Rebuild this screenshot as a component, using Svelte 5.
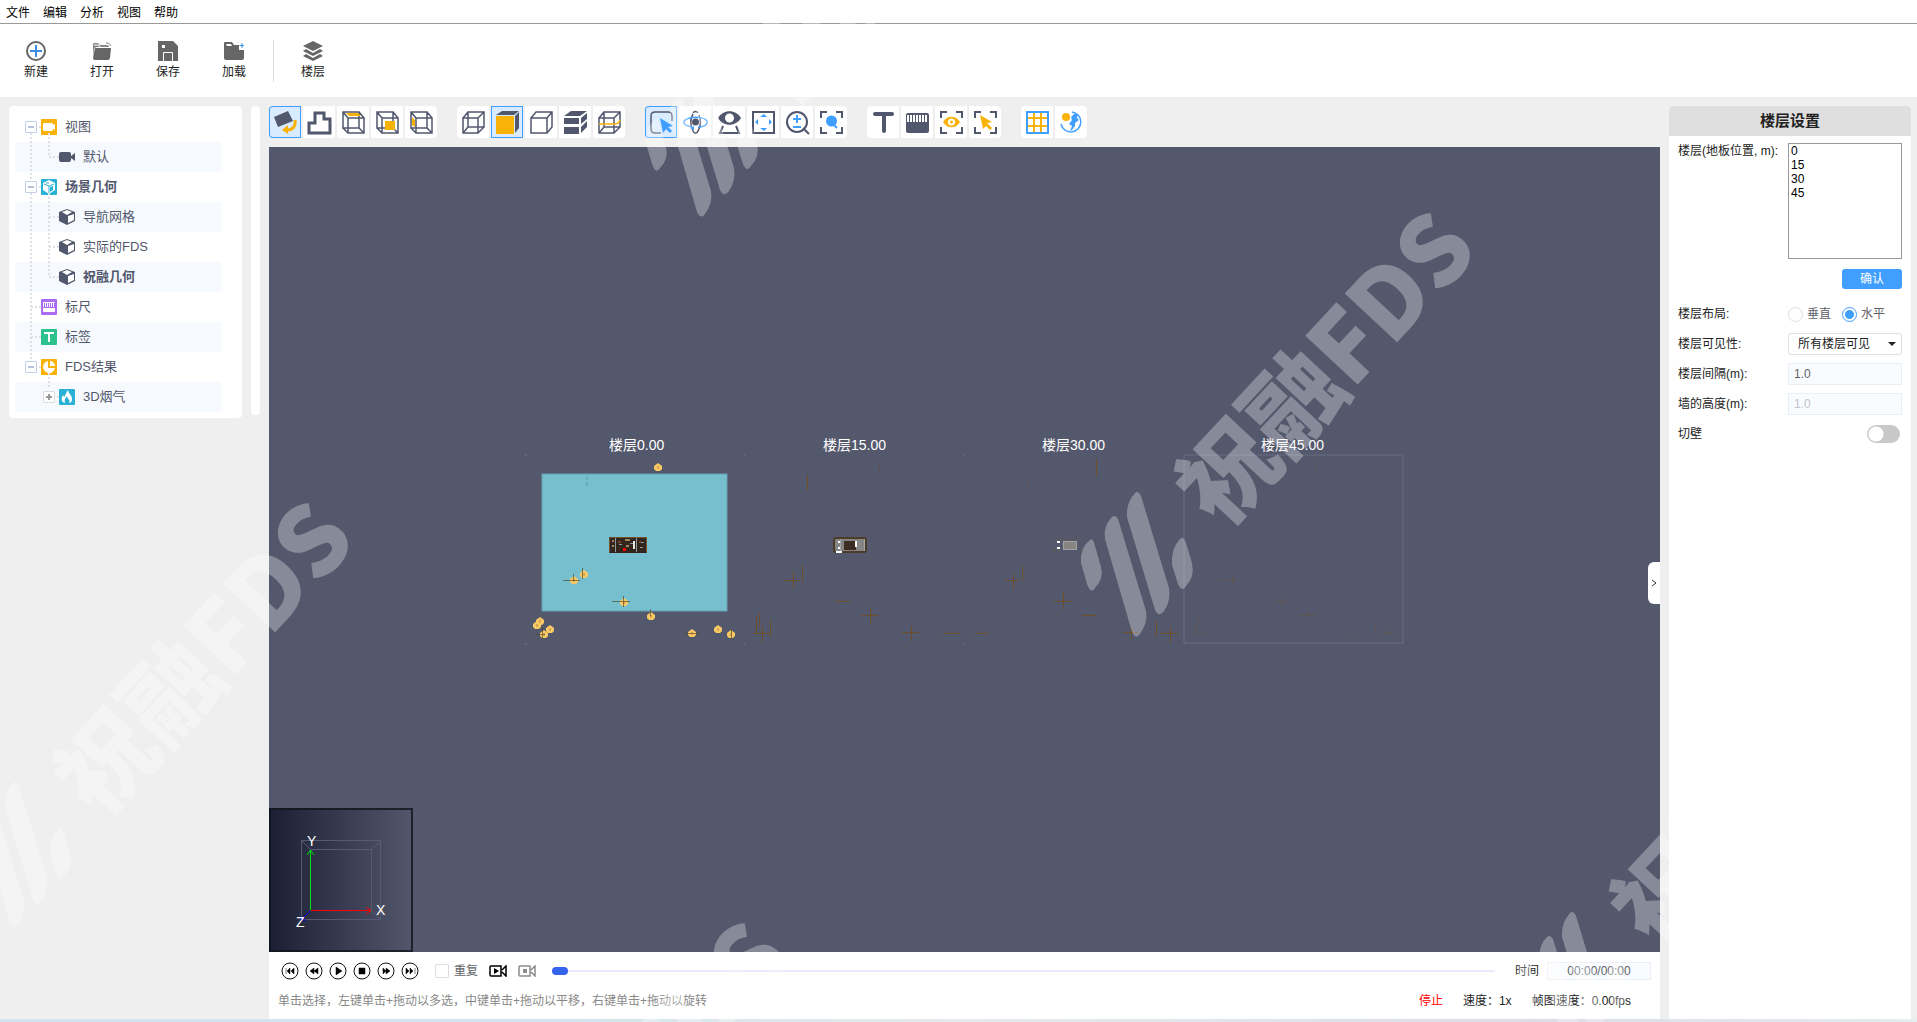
<script lang="ts">
	type Shape = [kind: string, d: string];

	const menus = ['文件', '编辑', '分析', '视图', '帮助'];

	const fileTools = [
		{ id: 'new', label: '新建' },
		{ id: 'open', label: '打开' },
		{ id: 'save', label: '保存' },
		{ id: 'load', label: '加载' }
	];

	const brackets = 'M6 12V6H12M21 6H27V12M27 21V27H21M12 27H6V21';
	const wireRight = 'M6 6H22V22H6ZM11 12H27V27H11ZM6 6L11 12M22 6L27 12M22 22L27 27M6 22L11 27';
	const wireLeft = 'M6 12H21V27H6ZM11 6H27V21H11ZM6 12L11 6M21 12L27 6M21 27L27 21M6 27L11 21';

	// viewport toolbar, drawn on a 32px grid
	const icons: Record<string, Shape[]> = {
		rotate: [
			['dark', 'M5 11L19 5L24 15L9 21Z'],
			['gold-line heavy', 'M26 14C27 20 24 24 18 24'],
			['gold', 'M19 19L13 24L19 28Z']
		],
		outline: [['line heavy', 'M6 27V17H12V7H21V13H27V27Z']],
		top: [['line', wireRight], ['gold', 'M9 7H21L24 10H12Z']],
		front: [['line', wireRight], ['gold', 'M14 15H24V24H14Z']],
		side: [['line', wireRight], ['gold', 'M7 11L10 14V21L7 19Z']],
		wire: [['line', wireLeft]],
		solid: [
			['gold', 'M5 10H23V28H5Z'],
			['dark', 'M5 9L11 5H28L23 9Z'],
			['dark', 'M24 10L28 6V22L24 27Z']
		],
		box: [['line', 'M6 12H22V27H6ZM6 12L11 6H27V21L22 27M22 12L27 6']],
		slice: [
			['dark', 'M5 10L12 5H28L21 10Z'],
			['dark', 'M5 12H20V18H5Z'],
			['dark', 'M5 21H20V28H5Z'],
			['dark', 'M22 12L28 7V13L22 18Z'],
			['dark', 'M22 21L28 15V21L22 27Z']
		],
		section: [['line', wireLeft], ['gold-line', 'M6 18H20C25 18 26 17 27 14']],
		select: [
			['line', 'M16 27H10Q6 27 6 23V10Q6 6 10 6H23Q27 6 27 10V15'],
			['blue', 'M15 12L28 20L23 21L27 25L25 27L21 23L18 27Z']
		],
		orbit: [
			['line', 'M14 7C15 5 18 5 19 7M20 9C22 14 22 20 19 25C18 28 15 28 14 25C11 20 11 13 14 8'],
			['blue-line', 'M13 21C2 19 3 14 11 12C17 10 30 12 28 17C27 20 22 21 19 21'],
			['dark', 'M13 16A3 3 0 1 0 20 16A3 3 0 1 0 13 16'],
			['blue', 'M15 20L11 22L15 24Z']
		],
		eye: [
			['dark', 'M5 12C10 3 23 3 28 12C23 21 10 21 5 12Z'],
			['white', 'M12 12A4 4 0 1 0 21 12A4 4 0 1 0 12 12'],
			['line thick', 'M10 20L7 27H26L23 20']
		],
		fit: [
			['line thick', 'M6 6H27V27H6Z'],
			['blue', 'M17 8L20 11H13ZM17 25L13 22H20ZM8 16L11 13V19ZM25 16L22 13V19Z']
		],
		zoom: [
			['line thick', 'M6 16A10 10 0 1 0 26 16A10 10 0 1 0 6 16M22 22L28 28'],
			['blue-line thick', 'M16 9V17M12 13H20M12 21H20']
		],
		focus: [
			['line thick', brackets],
			['blue', 'M11 15A5 5 0 1 0 22 15A5 5 0 1 0 11 15'],
			['blue-line thick', 'M19 19L22 22']
		],
		text: [['line bar', 'M8 8H25M17 8V25']],
		ruler: [
			['dark', 'M5 9Q5 7 7 7H26Q28 7 28 9V25Q28 27 26 27H7Q5 27 5 25Z'],
			['white', 'M6 9H8V16H6ZM9 9H11V16H9ZM12 9H14V16H12ZM15 9H17V16H15ZM18 9H20V16H18ZM21 9H23V16H21ZM24 9H26V16H24Z']
		],
		watch: [
			['line thick', brackets],
			['gold', 'M8 16C12 9 21 9 25 16C21 23 12 23 8 16Z'],
			['white', 'M13 16A3 3 0 1 0 20 16A3 3 0 1 0 13 16'],
			['gold', 'M15 16A1 1 0 1 0 18 16A1 1 0 1 0 15 16']
		],
		pick: [['line thick', brackets], ['gold', 'M11 9L23 16L18 17L23 22L21 24L17 20L14 23Z']],
		grid: [
			['gold-line thick', 'M6 12H27M6 20H27M13 6V27M20 6V27'],
			['blue-line thick', 'M6 6H27V27H6Z']
		],
		world: [
			['blue-line', 'M17 6A10 10 0 1 1 6 18'],
			['gold', 'M7 11A4 4 0 1 0 15 11A4 4 0 1 0 7 11'],
			['blue', 'M16 11L19 8L23 8L22 12L24 14L20 17L20 20L17 24L15 25L17 20L14 18L17 14Z']
		]
	};

	const toolGroups = [
		[['rotate', '旋转'], ['outline', '轮廓'], ['top', '顶视图'], ['front', '前视图'], ['side', '侧视图']],
		[['wire', '线框'], ['solid', '实体'], ['box', '边框'], ['slice', '切片'], ['section', '剖面']],
		[['select', '选择'], ['orbit', '环绕'], ['eye', '漫游'], ['fit', '平移'], ['zoom', '缩放'], ['focus', '聚焦']],
		[['text', '文字'], ['ruler', '标尺'], ['watch', '观察'], ['pick', '拾取']],
		[['grid', '网格'], ['world', '复位']]
	];

	let active = $state(['rotate', 'solid', 'select']);

	function toggleTool(id: string) {
		active = active.includes(id) ? active.filter((t) => t !== id) : [...active, id];
	}

	const tree = [
		{ label: '视图', icon: 'view', tint: 'amber', level: 0, expander: '-' },
		{ label: '默认', icon: 'camera', tint: '', level: 1 },
		{ label: '场景几何', icon: 'scene', tint: 'cyan', level: 0, expander: '-', bold: true },
		{ label: '导航网格', icon: 'cube', tint: '', level: 1 },
		{ label: '实际的FDS', icon: 'cube', tint: '', level: 1 },
		{ label: '祝融几何', icon: 'cube', tint: '', level: 1, bold: true },
		{ label: '标尺', icon: 'ruler', tint: 'violet', level: 0 },
		{ label: '标签', icon: 'tag', tint: 'green', level: 0 },
		{ label: 'FDS结果', icon: 'pie', tint: 'amber', level: 0, expander: '-' },
		{ label: '3D烟气', icon: 'flame', tint: 'cyan', level: 1, expander: '+' }
	];

	const floorLabels = [
		{ text: '楼层0.00', x: 340 },
		{ text: '楼层15.00', x: 554 },
		{ text: '楼层30.00', x: 773 },
		{ text: '楼层45.00', x: 992 }
	];

	const lamps = [
		[389, 320], [315, 427], [305, 433], [355, 455], [382, 469], [271, 474],
		[268, 478], [281, 482], [275, 487], [423, 486], [449, 482], [462, 487]
	];

	const playback = [
		{ label: '开头', d: 'M5 6V12M9 6L6 9L9 12ZM13 6L10 9L13 12Z' },
		{ label: '后退', d: 'M9 6L5 9L9 12ZM13 6L9 9L13 12Z' },
		{ label: '播放', d: 'M7 5L13 9L7 13Z' },
		{ label: '停止', d: 'M6 6H12V12H6Z' },
		{ label: '前进', d: 'M6 6L9 9L6 12ZM9 6L13 9L9 12Z' },
		{ label: '结尾', d: 'M5 6L8 9L5 12ZM9 6L12 9L9 12ZM14 6V12' }
	];

	const stamps = [[0, 0], [-1122, 290], [-435, -420], [-686, 710], [435, 420]];

	let floors = $state('0\n15\n30\n45');
	let layout = $state('horizontal');
	let frame = $state(0);
	let repeat = $state(false);
	let cutWall = $state(false);
</script>

<div class="app">
	<nav class="menubar">
		{#each menus as menu}
			<button>{menu}</button>
		{/each}
	</nav>

	<header class="toolbar">
		{#each fileTools as tool}
			<button class="file-tool">
				<svg viewBox="0 0 20 20">
					{#if tool.id === 'new'}
						<circle cx="10" cy="10" r="9" fill="none" stroke="#666" stroke-width="2" />
						<path d="M10 4V16M4 10H16" stroke="#3a8ee6" stroke-width="2" />
					{:else if tool.id === 'open'}
						<path d="M1 16V3Q1 2 2 2H6L8 4H15Q17 4 17 6H4L2 8Z" fill="#888" />
						<path d="M3 7H19L18 17Q17 19 16 19H3Q1 19 1 17Z" fill="#666" />
						<path d="M2 4H7L8 6" stroke="#fff" fill="none" />
						<path d="M14 2Q17 1 19 5" stroke="#888" fill="none" />
					{:else if tool.id === 'save'}
						<path d="M0 0H15L20 5V20H0Z" fill="#666" />
						<path d="M5.5 20V11.5H14.5V20" stroke="#fff" fill="none" />
						<path d="M4 4H7V7H4Z" fill="#fff" />
					{:else}
						<path d="M0 2Q0 1 1 1H8L10 4H15V9H20V17Q20 19 18 19H2Q0 19 0 17Z" fill="#666" />
						<path d="M2 3H7L8 5H3Z" fill="#fff" />
						<path d="M18 2V7M15.5 4.5H20" stroke="#3a8ee6" />
					{/if}
				</svg>
				{tool.label}
			</button>
		{/each}
		<span class="divider"></span>
		<button class="file-tool">
			<svg viewBox="0 0 20 20" fill="#666">
				<path d="M10 0L20 5L10 10L0 5Z" />
				<path d="M0 10L3 8L10 12L17 8L20 10L10 15Z" />
				<path d="M0 15L3 13L10 17L17 13L20 15L10 20Z" />
			</svg>
			楼层
		</button>
	</header>

	<main>
		<aside class="tree">
			<svg class="guides" width="60" height="312">
				<path d="M22 27V261M40 27V51H50M40 87V171H50M40 111H50M40 141H50M22 201H32M22 231H32M30 21H32M30 81H32M30 261H32M40 267V282M48 291H50" />
			</svg>
			<ul>
				{#each tree as node}
					<li class:child={node.level === 1} class:bold={node.bold} class:nested={node.expander === '+'}>
						{#if node.expander}
							<button class="expander" class:plus={node.expander === '+'} aria-label={'展开 ' + node.label}></button>
						{:else}
							<span class="spacer"></span>
						{/if}
						<span class="node-icon {node.tint}">
							<svg viewBox="0 0 16 16">
								{#if node.icon === 'view'}
									<path fill="#fff" d="M2 5Q2 4 3 4H11Q12 4 12 6L14 5V11L12 10V11Q12 12 10 12H4Q2 12 2 11Z" />
								{:else if node.icon === 'camera'}
									<path fill="#51576c" d="M0 5Q0 3 2 3H10Q12 3 12 5V7L16 4V12L12 9V11Q12 13 10 13H2Q0 13 0 11Z" />
								{:else if node.icon === 'scene'}
									<path fill="#fff" d="M8 1L14 4V11L8 15L2 11V4Z" />
									<path stroke="#29b2d6" fill="none" d="M3 5L8 7L13 5M8 7V14M5 4H8" />
									<path fill="#29b2d6" d="M9 8L12 7V11L9 13Z" />
								{:else if node.icon === 'cube'}
									<path fill="#51576c" d="M8 0L16 3V12L8 16L0 12V3Z" />
									<path fill="#fff" d="M8 1L13 3L8 6L3 3ZM9 7L15 5V11L9 14Z" />
								{:else if node.icon === 'ruler'}
									<rect x="2" y="3" width="12" height="10" rx="1" fill="#fff" />
									<path stroke="#ab6cf2" d="M3.5 4V8M5.5 4V8M7.5 4V8M9.5 4V8M11.5 4V8M13.5 4V8M2 8.5H14" />
								{:else if node.icon === 'tag'}
									<path stroke="#fff" stroke-width="2" d="M3 4H13M8 4V13" />
								{:else if node.icon === 'pie'}
									<path fill="#fff" d="M7 2V9H14A6 6 0 1 1 7 2ZM9 2A5 5 0 0 1 14 7H9Z" />
								{:else}
									<path fill="#fff" d="M9 1C9 4 14 7 13 11C13 13 11 14 10 14C12 11 8 10 8 7C6 10 5 11 6 14C2 13 2 9 4 6L5 8C7 6 7 3 9 1Z" />
								{/if}
							</svg>
						</span>
						<span>{node.label}</span>
					</li>
				{/each}
			</ul>
		</aside>

		<div class="scroll-track"></div>

		<section class="stage">
			<div class="view-tools">
				{#each toolGroups as group}
					<div class="group">
						{#each group as [id, label]}
							<button class:active={active.includes(id)} aria-label={label} onclick={() => toggleTool(id)}>
								<svg viewBox="0 0 32 32">
									{#each icons[id] as [kind, d]}
										<path class={kind} {d} />
									{/each}
								</svg>
							</button>
						{/each}
					</div>
				{/each}
			</div>

			<div class="viewport">
				<svg class="scene">
					<path class="corner" d="M255 308H258M474 308H477M694 308H696M255 497H258M474 497H477M694 497H696" />
					<rect x="273" y="327" width="185" height="137" fill="#76bfcf" stroke="#679fb2" />
					<path class="ghost" d="M318 330V333M318 335V339" />

					<!-- floor 0 building -->
					<rect x="340" y="390" width="38" height="16" rx="1" fill="#33251e" />
					<path stroke="#71552f" d="M341 390.5H378M340.5 391V405M377.5 391V405" />
					<path stroke="#9d8860" d="M343 394H345M343 399H345M356 393H361M357 399H360" stroke-width="2" />
					<path stroke="#8d9a9a" d="M346.5 391V405M367.5 391V405M350 397.5H353M372 395.5H375M371 400.5H374M361 396.5H364" />
					<path stroke="#e4e4e4" d="M365 394V402" stroke-width="2" />
					<path stroke="#73412d" d="M349 395H352M370 395H372" stroke-width="2" />
					<rect x="354" y="401" width="3" height="3" fill="#f00" />

					<!-- floor 15 building -->
					<rect x="565" y="391" width="32" height="14" rx="2" fill="#858585" stroke="#4d3b29" stroke-width="2" />
					<rect x="575" y="394" width="12" height="9" fill="#3c2c22" />
					<path stroke="#a5a5a5" d="M571.5 392V404M595.5 392V404" />
					<path stroke="#fff" d="M587 394V400M567 405H573M569 395H571M569 401H571" stroke-width="2" />

					<!-- floor 30 building -->
					<path stroke="#6e5438" stroke-dasharray="2 2" fill="none" d="M786 392H814M785 403H793M812 403H815" />
					<rect x="794" y="394" width="14" height="9" fill="#888580" />
					<path stroke="#a3a3a3" fill="none" d="M794.5 394.5H807.5V402.5H794.5Z" />
					<path stroke="#fff" stroke-width="2" d="M788 395H791M788 401H791" />

					<rect class="frame" x="915" y="308" width="219" height="188" />
					<path
						class="sprinkler"
						d="M538 328V343M533 418V435M524 425V441M515 433H531M566 454H581M601 460V477M592 468H609M487 470V486M490 466V480M501 473V490M493 479V495M484 486H502M642 479V494M633 485H650M674 486H690M706 486H720M827 312V329M753 419V434M744 427V442M736 433H750M794 445V462M785 454H803M813 468H827M887 474V490M901 480V496M892 486H909M862 480V492M854 485H869"
					/>
					<path
						class="sprinkler faint"
						d="M610 317V325M758 334V342M1046 315V322M951 433H969M963 429V437M1007 454H1019M1013 449V459M1031 468H1046M1039 464V468M929 470V480M926 476V486M928 486H936M1106 478V485M1080 486H1086M1112 486H1126M1120 483V488"
					/>

					{#each lamps as [x, y]}
						<path class="lamp" d="M{x} {y - 4}L{x + 4} {y - 1}V{y + 2}L{x + 2} {y + 4}H{x - 2}L{x - 4} {y + 2}V{y - 1}Z" />
						<path class="lamp-mark" d="M{x} {y - 1}V{y + 2}" />
					{/each}
					<path class="lamp-cross" d="M294 433H311M304 427V433M313 421V432M343 454H361M354 449V460M381 462V469M415 486H431M265 487H276M273 480V494M462 482V492" />

					{#each floorLabels as label}
						<text x={label.x} y="303">{label.text}</text>
					{/each}
				</svg>

				<svg class="axes" viewBox="0 0 144 144">
					<defs>
						<linearGradient id="axes-bg">
							<stop offset="0" stop-color="#1b1f34" />
							<stop offset="1" stop-color="#53576c" />
						</linearGradient>
					</defs>
					<rect width="144" height="144" fill="url(#axes-bg)" />
					<rect x="1" y="1" width="142" height="142" fill="none" stroke="#12141c" stroke-opacity="0.8" stroke-width="2" />
					<path stroke="#565a72" fill="none" d="M32.5 32.5H111.5V111.5H32.5ZM41.5 41.5H102.5V102.5M32.5 32.5L41.5 41.5M111.5 32.5L102.5 41.5M111.5 111.5L102.5 102.5" />
					<path stroke="#00e010" fill="none" d="M41.5 102V42M38 47L41.5 42L45 47" />
					<path stroke="#f00" fill="none" d="M42 102.5H102M97 99L102 102.5L97 106" />
					<path stroke="#00f" fill="none" d="M41 103L32 112M32 108V112H37" />
					<text x="38" y="38">Y</text>
					<text x="107" y="107">X</text>
					<text x="27" y="119">Z</text>
				</svg>

				<button class="collapse" aria-label="收起">
					<svg viewBox="0 0 8 8"><path d="M2 1L6 4L2 7" /></svg>
				</button>
			</div>

			<footer>
				<div class="player">
					<div class="playback">
						{#each playback as control}
							<button aria-label={control.label}>
								<svg viewBox="0 0 18 18">
									<circle cx="9" cy="9" r="8" />
									<path d={control.d} />
								</svg>
							</button>
						{/each}
					</div>
					<label class="repeat"><input type="checkbox" bind:checked={repeat} />重复</label>
					<button class="record" aria-label="录制">
						<svg viewBox="0 0 18 12">
							<path d="M2 1H12V11H2Q1 11 1 10V2Q1 1 2 1ZM13 5L17 1V11L13 7" />
							<path class="fill" d="M5 3L10 6L5 9Z" />
						</svg>
					</button>
					<button class="record off" aria-label="停止录制" disabled>
						<svg viewBox="0 0 18 12">
							<path d="M2 1H12V11H2Q1 11 1 10V2Q1 1 2 1ZM13 5L17 1V11L13 7" />
							<path class="fill" d="M5 4H9V8H5Z" />
						</svg>
					</button>
					<input class="timeline" type="range" min="0" max="100" bind:value={frame} aria-label="时间轴" />
					<label class="time-label" for="time">时间</label>
					<input id="time" class="time" value="00:00/00:00" />
				</div>
				<div class="status">
					<span class="hint">单击选择，左键单击+拖动以多选，中键单击+拖动以平移，右键单击+拖动以旋转</span>
					<span class="stopped">停止</span>
					<span>速度：1x</span>
					<span>帧图速度：0.00fps</span>
				</div>
			</footer>
		</section>

		<aside class="settings">
			<h2>楼层设置</h2>
			<div class="row tall">
				<label for="floors">楼层(地板位置, m):</label>
				<textarea id="floors" bind:value={floors}></textarea>
			</div>
			<button class="confirm">确认</button>
			<div class="row" role="radiogroup" aria-labelledby="layout-label">
				<span id="layout-label">楼层布局:</span>
				<div class="radios">
					<label><input type="radio" value="vertical" bind:group={layout} />垂直</label>
					<label><input type="radio" value="horizontal" bind:group={layout} />水平</label>
				</div>
			</div>
			<div class="row">
				<label for="visible">楼层可见性:</label>
				<div class="select">
					<select id="visible"><option>所有楼层可见</option></select>
				</div>
			</div>
			<div class="row">
				<label for="spacing">楼层间隔(m):</label>
				<input id="spacing" class="number" value="1.0" />
			</div>
			<div class="row">
				<label for="height">墙的高度(m):</label>
				<input id="height" class="number" value="1.0" disabled />
			</div>
			<div class="row">
				<label for="cut">切壁</label>
				<input id="cut" class="switch" type="checkbox" role="switch" bind:checked={cutWall} />
			</div>
		</aside>
	</main>

	<div class="desktop-edge"></div>

	<svg class="watermark" aria-hidden="true">
		{#each stamps as [x, y]}
			<g transform="translate({x} {y})">
				<path d="M1090 540Q1080 547 1081 563L1087 584Q1091 595 1095 588Q1104 579 1101 567L1095 546Q1093 537 1090 540Z" />
				<path d="M1112 517Q1103 526 1105 539L1132 632Q1136 640 1140 634Q1148 623 1146 611L1118 519Q1115 514 1112 517Z" />
				<path d="M1135 493Q1126 503 1127 517L1155 610Q1159 618 1164 611Q1171 601 1169 588L1141 496Q1138 490 1135 493Z" />
				<path d="M1180 539Q1171 548 1172 565L1178 584Q1182 593 1186 586Q1195 577 1192 563L1186 543Q1183 535 1180 539Z" />
				<text transform="translate(1221 531) rotate(-47)">祝融FDS</text>
			</g>
		{/each}
	</svg>
</div>

<style>
	:global(body) {
		margin: 0;
		background: #efefef;
	}

	.app {
		display: flex;
		flex-direction: column;
		min-height: 100vh;
		font: 12px/16px 'Liberation Sans', 'Noto Sans CJK SC', sans-serif;
		color: #222;
	}

	button,
	input,
	select,
	textarea {
		box-sizing: border-box;
		margin: 0;
		padding: 0;
		border: 0;
		background: none;
		font: inherit;
		color: inherit;
	}

	button {
		cursor: pointer;
	}

	svg {
		display: block;
	}

	.menubar {
		display: flex;
		gap: 13px;
		height: 21px;
		padding: 2px 0 0 6px;
		background: #fff;
		border-bottom: 1px solid #999;
		color: #000;
	}

	.toolbar {
		display: flex;
		align-items: flex-start;
		height: 57px;
		padding: 16px 3px 0;
		background: #fff;
	}

	.file-tool {
		display: flex;
		flex-direction: column;
		align-items: center;
		gap: 3px;
		width: 66px;
		padding-top: 1px;
	}

	.file-tool svg {
		width: 20px;
		height: 20px;
	}

	.divider {
		width: 1px;
		height: 42px;
		margin: 0 6px;
		background: #ddd;
	}

	main {
		flex: 1;
		display: grid;
		grid-template-columns: 233px 9px minmax(0, 1fr) 242px;
		gap: 9px;
		padding: 9px 6px 0 9px;
	}

	.tree {
		position: relative;
		align-self: start;
		padding: 6px;
		border-radius: 4px;
		background: #fff;
		color: #51576c;
		font-size: 13px;
	}

	.tree ul {
		margin: 0;
		padding: 0;
		list-style: none;
	}

	.tree li {
		display: flex;
		align-items: center;
		width: 207px;
		height: 30px;
		box-sizing: border-box;
		padding-left: 10px;
		border-radius: 4px;
	}

	.tree li:nth-child(even) {
		background: #f6faff;
	}

	.tree .child {
		padding-left: 28px;
	}

	.tree .bold {
		font-weight: bold;
	}

	.guides {
		position: absolute;
		left: 0;
		top: 0;
		pointer-events: none;
	}

	.guides path {
		fill: none;
		stroke: #dfe0e5;
		stroke-width: 2;
		stroke-dasharray: 2 2;
	}

	.expander,
	.spacer {
		width: 12px;
		height: 12px;
		margin-right: 4px;
	}

	.expander {
		position: relative;
		border: 1px solid #c3cfe6;
		border-radius: 1px;
		background: #fff;
	}

	.expander::before,
	.expander.plus::after {
		content: '';
		position: absolute;
		left: 2px;
		top: 4px;
		width: 6px;
		height: 2px;
		background: #b5c2dd;
	}

	.expander.plus {
		border-color: #ddd;
	}

	.expander.plus::before,
	.expander.plus::after {
		background: #999;
	}

	.expander.plus::after {
		transform: rotate(90deg);
	}

	.node-icon {
		width: 16px;
		height: 16px;
		margin-right: 8px;
		border-radius: 1px;
	}

	.amber { background: #f9b208; }
	.cyan { background: #29b2d6; }
	.violet { background: #ab6cf2; }
	.green { background: #2dc18e; }

	.scroll-track {
		height: 309px;
		border-radius: 4px;
		background: #fff;
	}

	.stage {
		display: flex;
		flex-direction: column;
		min-width: 0;
	}

	.view-tools {
		display: flex;
		gap: 20px;
		padding-bottom: 9px;
	}

	.group {
		display: flex;
		gap: 2px;
	}

	.group button {
		width: 32px;
		height: 32px;
		background: #fff;
	}

	.group button:first-child {
		border-radius: 4px 0 0 4px;
	}

	.group button:last-child {
		border-radius: 0 4px 4px 0;
	}

	.group .active {
		background: #d9ebff;
		box-shadow: inset 0 0 0 1px #409eff;
	}

	.group path {
		fill: none;
		stroke-width: 1.5;
	}

	.group .line { stroke: #51576c; }
	.group .gold-line { stroke: #f9b208; }
	.group .blue-line { stroke: #409eff; }
	.group .dark { fill: #51576c; }
	.group .gold { fill: #f9b208; }
	.group .blue { fill: #409eff; }
	.group .white { fill: #fff; }
	.group .thick { stroke-width: 2; }
	.group .heavy { stroke-width: 3; }

	.group .bar {
		stroke-width: 4;
		stroke-linecap: round;
	}

	.viewport {
		position: relative;
		flex: 1;
		overflow: hidden;
		background: #54586c;
	}

	.scene {
		position: absolute;
		width: 100%;
		height: 100%;
	}

	.scene text,
	.axes text {
		fill: #fff;
		font-size: 14px;
	}

	.corner,
	.frame {
		fill: none;
		stroke: #696d81;
	}

	.ghost {
		stroke: #5c96a5;
	}

	.sprinkler {
		stroke: #6b5027;
		shape-rendering: crispEdges;
	}

	.faint {
		opacity: 0.4;
	}

	.lamp {
		fill: #fbc964;
	}

	.lamp-mark {
		stroke: #b08a45;
	}

	.lamp-cross {
		stroke: #5a4a2c;
		stroke-opacity: 0.7;
		shape-rendering: crispEdges;
	}

	.axes {
		position: absolute;
		left: 0;
		bottom: 0;
		width: 144px;
		height: 144px;
	}

	.collapse {
		position: absolute;
		right: 0;
		top: 415px;
		display: flex;
		align-items: center;
		justify-content: center;
		width: 12px;
		height: 42px;
		border-radius: 6px 0 0 6px;
		background: #fff;
	}

	.collapse svg {
		width: 8px;
		height: 8px;
	}

	.collapse path {
		fill: none;
		stroke: #333;
	}

	footer {
		padding: 9px;
		background: #fff;
	}

	.player {
		display: flex;
		align-items: center;
		height: 20px;
		padding-left: 3px;
	}

	.playback {
		display: flex;
		gap: 6px;
		margin-right: 16px;
	}

	.playback svg {
		width: 18px;
		height: 18px;
	}

	.playback circle {
		fill: none;
		stroke: #111;
	}

	.playback path {
		fill: #000;
		stroke: #000;
		stroke-width: 0.5;
	}

	.repeat {
		display: flex;
		align-items: center;
		gap: 5px;
		margin-right: 11px;
		color: #606266;
	}

	.repeat input {
		appearance: none;
		width: 14px;
		height: 14px;
		border: 1px solid #ddd;
		border-radius: 1px;
	}

	.repeat input:checked {
		background: #409eff;
	}

	.record {
		margin-right: 11px;
	}

	.record svg {
		width: 18px;
		height: 12px;
	}

	.record path {
		fill: none;
		stroke: #000;
		stroke-width: 1.5;
	}

	.record .fill {
		fill: #000;
		stroke: none;
	}

	.record.off {
		margin-right: 16px;
		opacity: 0.45;
	}

	.timeline {
		flex: 1;
		min-width: 0;
		height: 16px;
		margin-right: 20px;
		appearance: none;
	}

	.timeline::-webkit-slider-runnable-track {
		height: 2px;
		background: #e6eafb;
	}

	.timeline::-webkit-slider-thumb {
		appearance: none;
		width: 16px;
		height: 8px;
		margin-top: -3px;
		border-radius: 4px;
		background: #3763eb;
	}

	.time-label {
		margin-right: 8px;
	}

	.time {
		width: 104px;
		height: 18px;
		border: 1px solid #ebeef5;
		background: #f9fcff;
		text-align: center;
		color: #606266;
	}

	.status {
		display: flex;
		gap: 20px;
		padding: 12px 20px 1px 0;
	}

	.hint {
		margin-right: auto;
		color: #888;
	}

	.stopped {
		color: #f00;
	}

	.settings {
		border-radius: 4px 4px 0 0;
		background: #fff;
	}

	.settings h2 {
		margin: 0 0 7px;
		border-radius: 4px 4px 0 0;
		background: #dfdfdf;
		font-size: 15px;
		line-height: 30px;
		text-align: center;
	}

	.row {
		display: flex;
		align-items: center;
		justify-content: space-between;
		height: 30px;
		padding: 0 9px;
	}

	.row.tall {
		align-items: flex-start;
		height: 117px;
	}

	.row textarea {
		width: 114px;
		height: 116px;
		padding: 0 2px;
		border: 1px solid #999;
		line-height: 14px;
		color: #000;
		resize: none;
	}

	.confirm {
		display: block;
		width: 60px;
		height: 20px;
		margin: 9px 9px 10px auto;
		border-radius: 3px;
		background: #409eff;
		color: #fff;
	}

	.radios {
		display: flex;
		gap: 11px;
		width: 114px;
		color: #606266;
		white-space: nowrap;
	}

	.radios label {
		display: flex;
		align-items: center;
		gap: 4px;
	}

	.radios input {
		appearance: none;
		width: 15px;
		height: 15px;
		border: 1px solid #ddd;
		border-radius: 50%;
	}

	.radios input:checked {
		border-color: #409eff;
		background: radial-gradient(circle, #409eff 4px, #fff 5px);
	}

	.select {
		position: relative;
	}

	.select::after {
		content: '';
		position: absolute;
		right: 6px;
		top: 9px;
		border: 4px solid transparent;
		border-top-color: #222;
		border-bottom: 0;
		pointer-events: none;
	}

	.select select {
		display: block;
		appearance: none;
		width: 114px;
		height: 22px;
		padding-left: 9px;
		border: 1px solid #dcdfe6;
		border-radius: 3px;
		background: #fff;
	}

	.number {
		width: 114px;
		height: 22px;
		padding: 0 5px;
		border: 1px solid #ebeef5;
		background: #f9fcff;
		color: #606266;
	}

	.number:disabled {
		color: #c0c4cc;
	}

	.switch {
		appearance: none;
		width: 33px;
		height: 18px;
		margin-right: 2px;
		border-radius: 9px;
		background: radial-gradient(circle at 9px 9px, #fff 7px, #c8c8c8 8px);
	}

	.switch:checked {
		background: radial-gradient(circle at 24px 9px, #fff 7px, #409eff 8px);
	}

	.desktop-edge {
		height: 3px;
		background: linear-gradient(90deg, #d3e4ec 0 30%, #e6ebed 50%, #dcdce8 80%, #e4edf0);
	}

	.watermark {
		position: fixed;
		inset: 0;
		width: 100%;
		height: 100%;
		fill: #fff;
		opacity: 0.3;
		pointer-events: none;
	}

	.watermark text {
		font: 900 96px 'Noto Sans CJK SC', sans-serif;
	}
</style>
